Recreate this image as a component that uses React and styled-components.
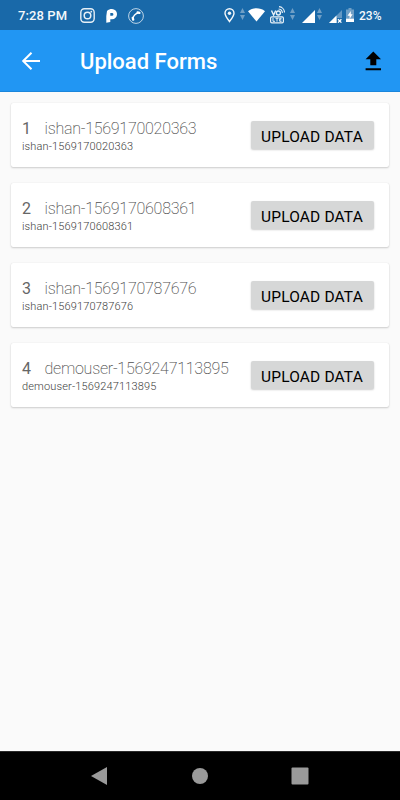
import styled, { createGlobalStyle } from 'styled-components';

const GlobalStyle = createGlobalStyle`
  * {
    box-sizing: border-box;
  }
  body {
    margin: 0;
    background-color: #fafafa;
    font-family: Roboto, 'Liberation Sans', sans-serif;
  }
`;

const Screen = styled.div`
  display: flex;
  flex-direction: column;
  width: 400px;
  height: 800px;
  background-color: #fafafa;
  overflow: hidden;
`;

const StatusBar = styled.div`
  display: flex;
  align-items: center;
  flex: none;
  height: 30px;
  padding: 1px 18px 0 18px;
  background-color: #1969a9;
  color: #f4f8fb;
`;

const Clock = styled.span`
  width: 62px;
  font-size: 13px;
  font-weight: 500;
  letter-spacing: 0.1px;
  line-height: 16px;
  white-space: nowrap;
`;

const StatusIcon = styled.svg`
  display: block;
  flex: none;
  margin-left: ${({ $gap }) => $gap || 0}px;
`;

const StatusGroup = styled.div`
  display: flex;
  align-items: center;
  margin-left: auto;
`;

const Battery = styled.span`
  width: 23px;
  margin-left: 5px;
  font-size: 12px;
  font-weight: 500;
  line-height: 16px;
  white-space: nowrap;
`;

const AppBar = styled.header`
  display: flex;
  align-items: center;
  flex: none;
  height: 62px;
  padding: 0 17px 0 19px;
  background-color: #2196f3;
  border-bottom: 1px solid #1b86db;
`;

const IconButton = styled.button`
  display: flex;
  padding: 0;
  border: none;
  background: none;
  color: ${({ $color }) => $color};
`;

const Title = styled.h1`
  flex: 1;
  margin: 3px 0 0 37px;
  color: #fff;
  font-size: 22px;
  font-weight: 500;
  line-height: 28px;
`;

const List = styled.main`
  display: flex;
  flex: 1;
  flex-direction: column;
  gap: 16px;
  padding: 11px 11px 0;
`;

const Card = styled.section`
  display: flex;
  justify-content: space-between;
  height: 64px;
  padding: 16px 15px 0 11px;
  border-radius: 2px;
  background-color: #fff;
  box-shadow: 0 1px 2px rgba(0, 0, 0, 0.18), 0 0 1px rgba(0, 0, 0, 0.12);
`;

const Heading = styled.div`
  display: flex;
  height: 19px;
  color: #666;
  font-size: 16px;
  line-height: 19px;
`;

const Index = styled.span`
  width: 22.5px;
  font-weight: 400;
`;

const Name = styled.span`
  font-weight: 200;
  letter-spacing: -0.25px;
  color: #505050;
`;

const Detail = styled.p`
  margin: 0;
  color: #404040;
  font-size: 11px;
  font-weight: 300;
  letter-spacing: 0.15px;
  line-height: 17px;
`;

const UploadButton = styled.button`
  width: 123px;
  height: 28px;
  margin-top: 2px;
  padding: 4px 1px 0 0;
  border: none;
  border-radius: 2px;
  background-color: #d6d7d7;
  box-shadow: 0 1px 2px rgba(0, 0, 0, 0.2);
  color: #000;
  font-family: inherit;
  font-size: 15.5px;
  font-weight: 400;
  letter-spacing: 0.15px;
  line-height: 24px;
  white-space: nowrap;
`;

const NavBar = styled.nav`
  display: flex;
  align-items: center;
  justify-content: center;
  flex: none;
  gap: 76px;
  height: 49px;
  padding-bottom: 1px;
  border-top: 1px solid #2a2a2a;
  background-color: #000;
`;

const forms = [
  'ishan-1569170020363',
  'ishan-1569170608361',
  'ishan-1569170787676',
  'demouser-1569247113895',
];

const InstagramIcon = () => (
  <StatusIcon width='15' height='15' viewBox='0 0 15 15' fill='none' stroke='#e6eff6'>
    <rect x='0.8' y='0.8' width='13.4' height='13.4' rx='3.6' strokeWidth='1.4' />
    <circle cx='7.5' cy='7.5' r='3.3' strokeWidth='1.5' />
    <circle cx='11.3' cy='3.7' r='0.9' fill='#e6eff6' stroke='none' />
  </StatusIcon>
);

const ParkingIcon = () => (
  <StatusIcon $gap={11} width='11' height='14' viewBox='0 0 11 14' fill='#fff'>
    <path
      fillRule='evenodd'
      d='M1 2C2.5 0.6 4 0 6 0A5.1 5.1 0 0 1 11 5.2A5.1 5.1 0 0 1 6 10.3H4.3V13L0.3 13.8V7ZM4.3 4V6.8H6A1.4 1.4 0 0 0 6 4Z'
    />
  </StatusIcon>
);

const PhoneIcon = () => (
  <StatusIcon $gap={11} width='16' height='16' viewBox='0 0 16 16' fill='none' stroke='#fff'>
    <circle cx='8' cy='8' r='7.4' strokeWidth='0.9' stroke='#cfe0ed' />
    <path d='M4.8 11.5C5 8.2 7.2 5.6 10.9 4.6' strokeWidth='1.4' />
    <path d='M4.7 9.8L5.2 11.6M9.6 4.4L11.4 4.9' strokeWidth='2.3' strokeLinecap='round' />
  </StatusIcon>
);

const LocationIcon = () => (
  <StatusIcon width='11' height='15' viewBox='0 0 11 15' fill='none' stroke='#f4f8fb'>
    <path d='M5.5 13.5C3 10.3 1 7.8 1 5.2A4.5 4.5 0 0 1 10 5.2C10 7.8 8 10.3 5.5 13.5Z' strokeWidth='1.4' />
    <circle cx='5.5' cy='5.3' r='1.7' fill='#f4f8fb' stroke='none' />
  </StatusIcon>
);

const DataArrows = ({ gap }) => (
  <StatusIcon $gap={gap} width='5' height='16' viewBox='0 0 5 16' fill='#6f9fc6'>
    <path d='M2.5 0L5 5H0ZM0 7H5L2.5 12Z' />
  </StatusIcon>
);

const WifiIcon = () => (
  <StatusIcon $gap={3} width='17' height='15' viewBox='0 0 17 15' fill='#fff'>
    <path d='M0 3.2C4.8-0.6 12.2-0.6 17 3.2L8.5 13.5Z' />
  </StatusIcon>
);

const VolteIcon = () => (
  <StatusIcon $gap={5} width='15' height='20' viewBox='0 0 15 20' fill='none' stroke='#e8f1f8'>
    <path d='M1.5 4.5L3.6 9L5.7 4.5' strokeWidth='1.4' />
    <circle cx='8.4' cy='7' r='2' strokeWidth='1.4' />
    <path d='M8.6 3A4.2 4.2 0 0 1 12.4 7M9 0.7A6 6 0 0 1 14.5 6.5' strokeWidth='1.2' />
    <rect x='0.6' y='10.8' width='12.8' height='6' rx='1.3' strokeWidth='1.2' />
    <path d='M3 12V15.3H5M5.5 12.3H8.5M7 12.3V15.6M11.6 12.3H9.7V15.3H11.6M9.7 13.8H11.3' strokeWidth='1' />
  </StatusIcon>
);

const SignalIcon = () => (
  <StatusIcon $gap={7} width='13' height='14' viewBox='0 0 13 14' fill='#fff'>
    <path d='M13 1V14H0Z' />
  </StatusIcon>
);

const NoDataSignalIcon = () => (
  <StatusIcon $gap={7} width='13' height='14' viewBox='0 -1 13 14'>
    <path d='M13 0V8H8V13H0Z' fill='#6498c3' />
    <path d='M7.5 5.5V13H0Z' fill='#fff' />
    <path d='M9 9.2L12.4 12.6M12.4 9.2L9 12.6' stroke='#fff' strokeWidth='1.3' />
  </StatusIcon>
);

const BatteryIcon = () => (
  <StatusIcon $gap={4} width='8' height='15' viewBox='0 0 8 15'>
    <path d='M2.5 0H5.5V1.4H8V14H0V1.4H2.5Z' fill='#6f9fc6' />
    <path d='M0 10.7H8V14H0Z' fill='#fff' />
    <path d='M4.8 3L1.5 7.8H3.6V11L6.6 6.3H4.8Z' fill='#fff' />
  </StatusIcon>
);

const App = () => (
  <>
    <GlobalStyle />
    <Screen>
      <StatusBar>
        <Clock>7:28 PM</Clock>
        <InstagramIcon />
        <ParkingIcon />
        <PhoneIcon />
        <StatusGroup>
          <LocationIcon />
          <DataArrows gap={5} />
          <WifiIcon />
          <VolteIcon />
          <DataArrows gap={5} />
          <SignalIcon />
          <DataArrows gap={2} />
          <NoDataSignalIcon />
          <BatteryIcon />
          <Battery>23%</Battery>
        </StatusGroup>
      </StatusBar>

      <AppBar>
        <IconButton $color='#fff' aria-label='Back'>
          <svg width='24' height='24' viewBox='0 0 24 24' fill='none' stroke='currentColor' strokeWidth='2'>
            <path d='M21 12H4.5M12.5 3.7L4.2 12L12.5 20.3' />
          </svg>
        </IconButton>
        <Title>Upload Forms</Title>
        <IconButton $color='#000' aria-label='Upload all'>
          <svg width='20' height='20' viewBox='0 0 20 20' fill='currentColor'>
            <path d='M10.3 0.5L18 8.3H13.3V14.3H7.3V8.3H2.6ZM2.6 17.2H18V19.2H2.6Z' />
          </svg>
        </IconButton>
      </AppBar>

      <List>
        {forms.map((name, index) => (
          <Card key={name}>
            <div>
              <Heading>
                <Index>{index + 1}</Index>
                <Name>{name}</Name>
              </Heading>
              <Detail>{name}</Detail>
            </div>
            <UploadButton>UPLOAD DATA</UploadButton>
          </Card>
        ))}
      </List>

      <NavBar>
        <svg width='24' height='20' viewBox='0 0 24 20' fill='#9a9a9a'>
          <path d='M3 10L19 1V19Z' />
        </svg>
        <svg width='24' height='20' viewBox='0 0 24 20' fill='#9a9a9a'>
          <circle cx='12' cy='10' r='8' />
        </svg>
        <svg width='24' height='20' viewBox='0 0 24 20' fill='#9a9a9a'>
          <rect x='3.5' y='1.5' width='17' height='17' rx='1' />
        </svg>
      </NavBar>
    </Screen>
  </>
);

export default App;
